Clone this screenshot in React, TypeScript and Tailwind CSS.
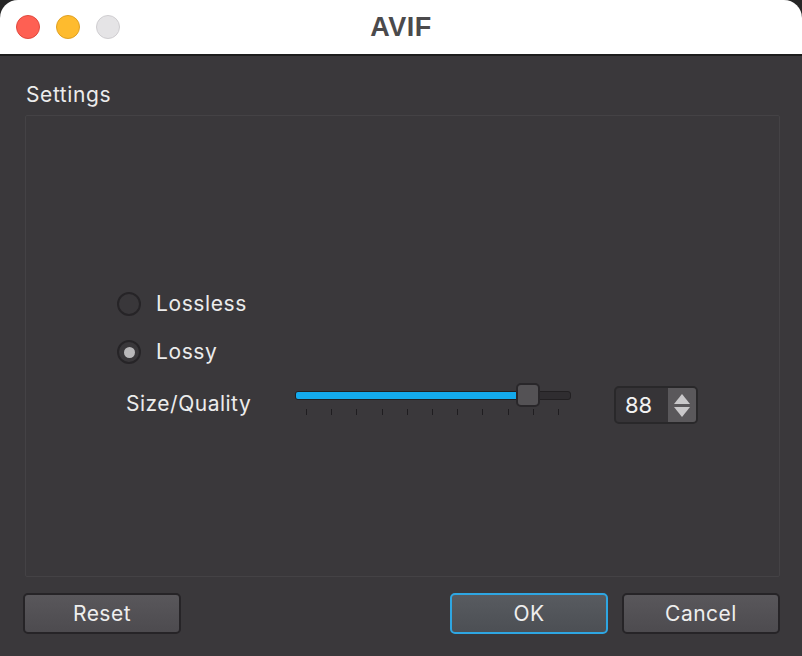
import React, { useState } from 'react';

const font = { fontFamily: 'Inter, "Noto Sans", "Liberation Sans", sans-serif' };

const Radio: React.FC<{ label: string; checked: boolean; onClick: () => void }> = ({ label, checked, onClick }) => (
  <button onClick={onClick} className="flex items-center gap-[15px] h-[24px] text-left">
    <span className="w-[24px] h-[24px] rounded-full border-2 border-[#262427] bg-[#39373a] flex items-center justify-center">
      {checked && <span className="w-[11px] h-[11px] rounded-full bg-[#b9b8ba]" />}
    </span>
    <span className="text-[21px] text-[#ececec] tracking-[0.6px]">{label}</span>
  </button>
);

const Button: React.FC<{ label: string; primary?: boolean }> = ({ label, primary }) => (
  <button
    className={`w-[158px] h-[41px] rounded-[5px] text-[21px] text-[#eeeeee] tracking-[0.5px] ${
      primary
        ? 'border-2 border-[#2ea6e2] bg-gradient-to-b from-[#585b60] to-[#4c4f54]'
        : 'border-2 border-[#262427] bg-gradient-to-b from-[#59575b] to-[#4d4b4f]'
    }`}
  >
    {label}
  </button>
);

export default function App() {
  const [mode, setMode] = useState<'lossless' | 'lossy'>('lossy');
  const [quality, setQuality] = useState(88);
  const pct = 0.81;
  const ticks = Array.from({ length: 11 }, (_, i) => i);

  return (
    <div className="w-[802px] h-[656px] bg-[#262626] overflow-hidden" style={font}>
      <div className="w-full h-full rounded-t-[18px] overflow-hidden flex flex-col">
        {/* Title bar */}
        <div className="h-[56px] shrink-0 bg-white border-b-2 border-[#1d1d1d] relative flex items-center">
          <div className="flex items-center gap-[16px] pl-[16px]">
            <span className="w-[24px] h-[24px] rounded-full bg-[#fe6053] border border-[#e0493e]" />
            <span className="w-[24px] h-[24px] rounded-full bg-[#febb2e] border border-[#dfa023]" />
            <span className="w-[24px] h-[24px] rounded-full bg-[#e5e4e6] border border-[#cfcdd0]" />
          </div>
          <div
            className="absolute inset-0 flex items-center justify-center text-[27px] font-bold text-[#4b4a4c] tracking-[0.5px]"
            style={{ fontFamily: '"Liberation Sans", Arial, sans-serif' }}
          >
            AVIF
          </div>
        </div>

        {/* Body */}
        <div className="flex-1 bg-[#3a383b] flex flex-col px-[23px] pt-[26px]">
          <div className="text-[21px] text-[#ececec] pl-[3px] leading-[26px] tracking-[0.6px]">Settings</div>
          <div className="mt-[7px] ml-[2px] mr-[-1px] h-[462px] border border-[#444245] rounded-[2px] flex flex-col pl-[91px] pt-[176px]">
            <div className="flex flex-col gap-[24px]">
              <Radio label="Lossless" checked={mode === 'lossless'} onClick={() => setMode('lossless')} />
              <Radio label="Lossy" checked={mode === 'lossy'} onClick={() => setMode('lossy')} />
            </div>
            <div className="flex items-start mt-[19px]">
              <div className="w-[178px] pl-[9px] pt-[9px] text-[21px] text-[#ececec] leading-[24px] tracking-[0.5px]">Size/Quality</div>
              {/* Slider */}
              <div className="w-[276px] relative">
                <div className="relative h-[24px] flex items-center">
                  <div className="w-full h-[9px] rounded-[3px] bg-[#2f2d30] border border-[#222022] overflow-hidden">
                    <div className="h-full bg-[#13aaed]" style={{ width: `${pct * 100}%` }} />
                  </div>
                  <div
                    className="absolute top-0 w-[24px] h-[24px] rounded-[5px] bg-[#545255] border-2 border-[#29272a]"
                    style={{ left: `${pct * 276 - 3}px` }}
                  />
                </div>
                <div className="flex justify-between pl-[11px] pr-[12px] mt-[2px]">
                  {ticks.map((t) => (
                    <span key={t} className="w-[1px] h-[6px] bg-[#1f1d20]" />
                  ))}
                </div>
              </div>
              {/* Spin box */}
              <div className="ml-[43px] mt-[3px] w-[84px] h-[38px] rounded-[5px] border-2 border-[#29282a] bg-[#363437] flex overflow-hidden">
                <input
                  value={quality}
                  onChange={(e) => setQuality(Number(e.target.value) || 0)}
                  className="w-[52px] bg-transparent text-[22px] text-[#f2f2f2] pl-[9px] outline-none"
                  style={font}
                />
                <div className="flex-1 bg-[#5a585b] flex flex-col items-center justify-center gap-[3px]">
                  <svg width="16" height="10" viewBox="0 0 16 10"><path d="M8 0 L16 10 L0 10 Z" fill="#c9c8ca" /></svg>
                  <svg width="16" height="10" viewBox="0 0 16 10"><path d="M0 0 L16 0 L8 10 Z" fill="#c9c8ca" /></svg>
                </div>
              </div>
            </div>
          </div>

          {/* Buttons */}
          <div className="flex items-center mt-[16px]">
            <Button label="Reset" />
            <div className="flex-1" />
            <div className="flex gap-[14px] mr-[-1px]">
              <Button label="OK" primary />
              <Button label="Cancel" />
            </div>
          </div>
        </div>
      </div>
    </div>
  );
}
